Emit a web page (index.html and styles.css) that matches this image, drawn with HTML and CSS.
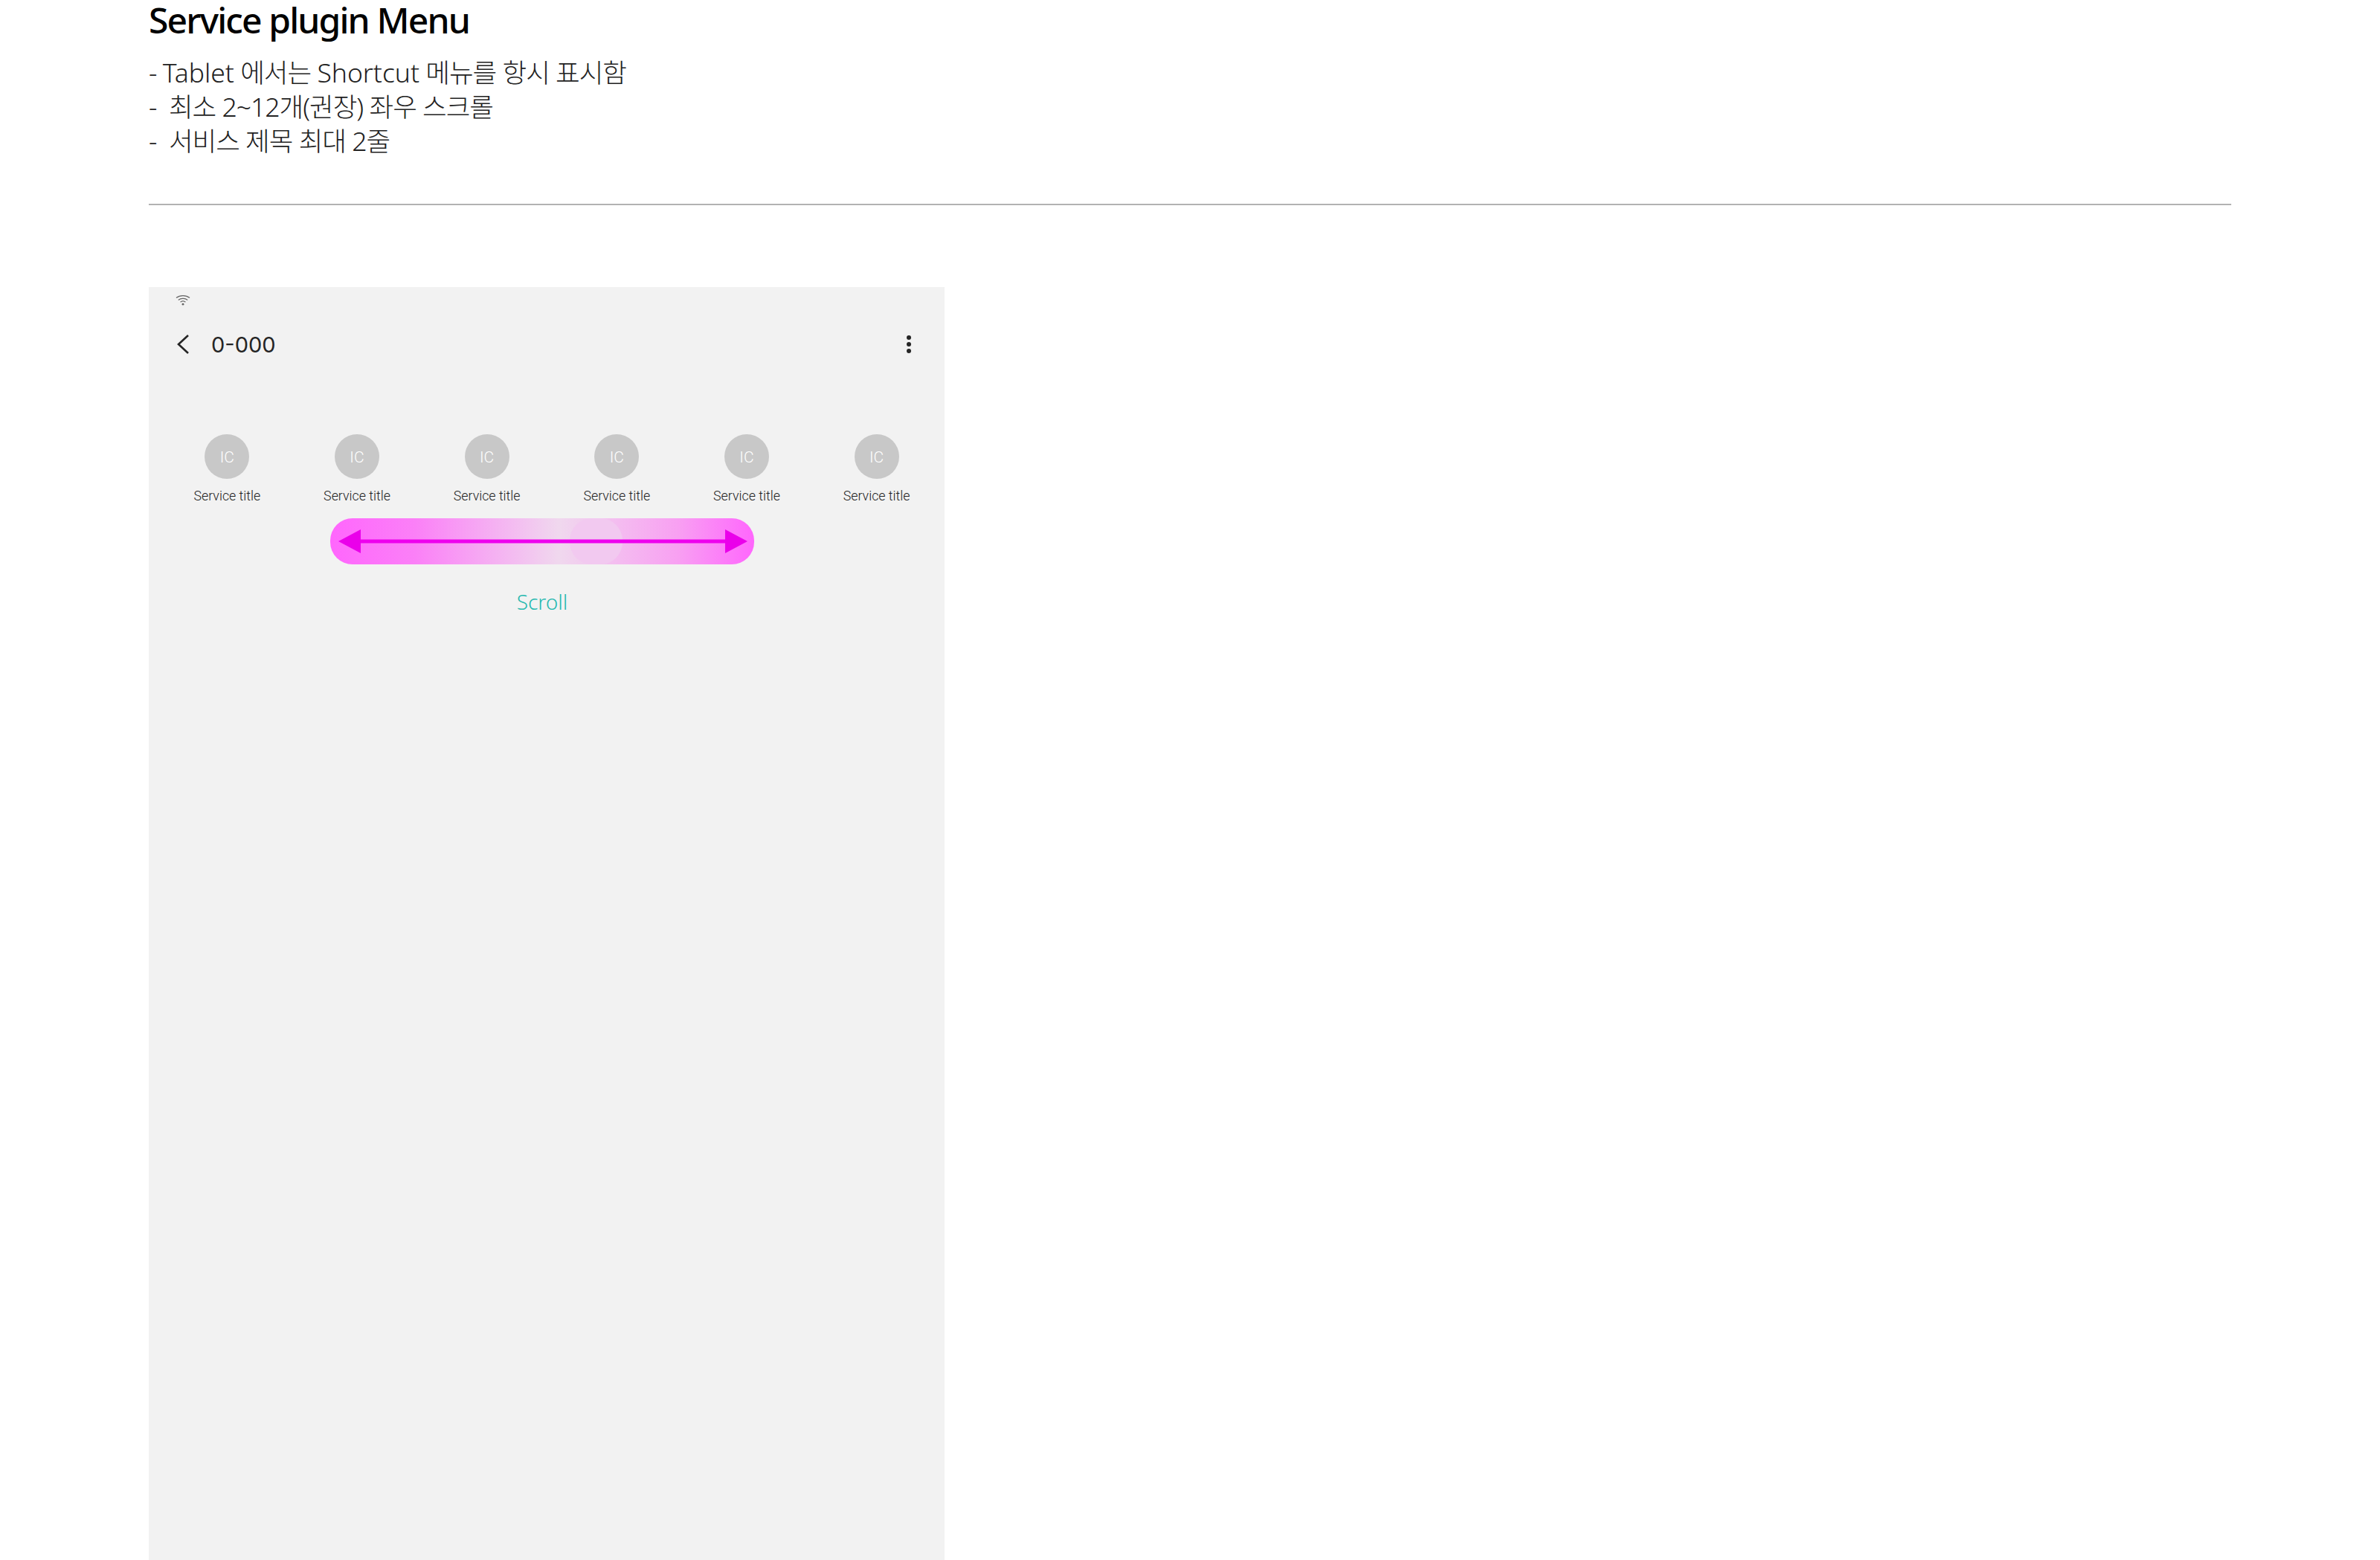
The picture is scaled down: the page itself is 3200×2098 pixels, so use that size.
FILE: index.html
```html
<!DOCTYPE html>
<html lang="ko">
<head>
    <meta charset="UTF-8">
    <meta name="viewport" content="width=device-width, initial-scale=1.0">
    <title>Service plugin Menu</title>
    <link rel="stylesheet" href="styles.css">
</head>
<body>
    <div class="page">
        <h1 class="page-title">Service plugin Menu</h1>
        <p class="note">- <span class="en">Tablet</span> 에서는 <span class="en">Shortcut</span> 메뉴를 항시 표시함</p>
        <p class="note">-&nbsp; 최소 2~12개(권장) 좌우 스크롤</p>
        <p class="note">-&nbsp; 서비스 제목 최대 2줄</p>
        <hr class="divider">

        <div class="tablet">
            <div class="status-bar">
                <svg class="wifi" viewBox="0 0 20 15" width="20" height="15">
                    <g fill="none" stroke="#666" stroke-width="1.3">
                        <path d="M1 4.6C6 .6 14 .6 19 4.6"/>
                        <path d="M3.8 7.4C7.4 4.6 12.6 4.6 16.2 7.4"/>
                        <path d="M6.6 10.2C8.6 8.6 11.4 8.6 13.4 10.2"/>
                    </g>
                    <circle cx="10" cy="13.2" r="1.4" fill="#666"/>
                </svg>
            </div>
            <div class="app-bar">
                <svg class="back" viewBox="0 0 18 28" width="18" height="28">
                    <path d="M16 2L3 14l13 12" fill="none" stroke="#252525" stroke-width="2.6"/>
                </svg>
                <span class="app-title">0-000</span>
                <div class="more"><i></i><i></i><i></i></div>
            </div>
            <div class="services">
                <div class="service"><div class="service-icon">IC</div><span>Service title</span></div>
                <div class="service"><div class="service-icon">IC</div><span>Service title</span></div>
                <div class="service"><div class="service-icon">IC</div><span>Service title</span></div>
                <div class="service"><div class="service-icon">IC</div><span>Service title</span></div>
                <div class="service"><div class="service-icon">IC</div><span>Service title</span></div>
                <div class="service"><div class="service-icon">IC</div><span>Service title</span></div>
            </div>
            <div class="scroll-hint">
                <div class="scroll-thumb"></div>
                <svg class="scroll-arrow" viewBox="0 0 570 62" width="570" height="62">
                    <rect x="40" y="28.5" width="492" height="5" fill="#ee00ee"/>
                    <path d="M11 31L41 15V47Z" fill="#ea00ea"/>
                    <path d="M561 31L531 15V47Z" fill="#ea00ea"/>
                </svg>
            </div>
            <div class="scroll-label">Scroll</div>
        </div>
    </div>
</body>
</html>
```

FILE: styles.css
```css
html, body {
    margin: 0;
    height: 2098px;
    overflow: hidden;
    background-color: white;
}
.page {
    padding: 0 200px;
    font-family: "Noto Sans", "Noto Sans CJK KR", sans-serif;
}
.page-title {
    margin: 0;
    height: 74px;
    font-size: 48px;
    line-height: 54px;
    font-weight: 500;
    letter-spacing: -1.85px;
    color: black;
}
.note {
    margin: 0;
    height: 46px;
    font-size: 35.5px;
    line-height: 46px;
    font-weight: 300;
    letter-spacing: -1px;
    color: #222;
}
.note .en {
    letter-spacing: 0;
}
.divider {
    margin: 62px 0 0;
    border: none;
    height: 2px;
    background-color: #b2b2b2;
}
.tablet {
    width: 1070px;
    height: 1712px;
    margin-top: 110px;
    background-color: #f2f2f2;
    overflow: hidden;
}
.status-bar {
    height: 25px;
    padding-left: 36px;
    display: flex;
    align-items: flex-end;
}
.app-bar {
    height: 48px;
    margin-top: 28px;
    padding: 0 45px 0 37px;
    display: flex;
    align-items: center;
}
.back {
    display: block;
}
.app-title {
    margin-left: 29px;
    font-family: Inter, sans-serif;
    font-size: 29px;
    color: #252525;
}
.more {
    margin-left: auto;
    display: flex;
    flex-direction: column;
    gap: 3px;
}
.more i {
    width: 6px;
    height: 6px;
    border-radius: 50%;
    background-color: #252525;
}
.services {
    margin-top: 97px;
    padding-left: 18px;
    display: flex;
}
.service {
    width: 174.67px;
    display: flex;
    flex-direction: column;
    align-items: center;
    font-family: Roboto, sans-serif;
    font-size: 17.8px;
    font-weight: 300;
    color: #222;
}
.service-icon {
    width: 60px;
    height: 60px;
    margin-bottom: 12px;
    border-radius: 50%;
    background-color: #c8c8c8;
    color: white;
    font-size: 21px;
    line-height: 62px;
    text-align: center;
}
.scroll-hint {
    position: relative;
    width: 570px;
    height: 62px;
    margin: 20px 0 0 244px;
    border-radius: 30px;
    background: linear-gradient(90deg, #ff66fd 0%, #fb80f7 20%, #f0d8ee 54%, #f8a0f2 82%, #ff66fd 100%);
}
.scroll-thumb {
    position: absolute;
    left: 322px;
    top: 0;
    width: 71px;
    height: 62px;
    border-radius: 30px;
    background-color: #f2c9f0;
}
.scroll-arrow {
    position: absolute;
    left: 0;
    top: 0;
}
.scroll-label {
    width: 570px;
    margin: 30px 0 0 244px;
    text-align: center;
    font-size: 28px;
    line-height: 40px;
    font-weight: 300;
    color: #27b9b0;
}
```
